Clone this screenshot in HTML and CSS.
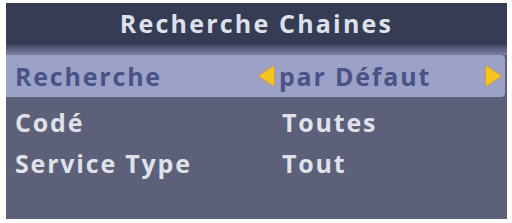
FILE: index.html
```
<!DOCTYPE html>
<html lang="fr">
<head>
    <meta charset="UTF-8">
    <title>Recherche Chaines</title>
    <link rel="stylesheet" href="styles.css">
</head>
<body>

    <div class="menu">
        <div class="menu-title">Recherche Chaines</div>
        <div class="menu-shade"></div>

        <div class="row on">
            <span class="label">Recherche</span>
            <span class="value">
                <svg class="arrow left" viewBox="0 0 18 22"><polygon points="17,1 2,11 17,21"/></svg>
                par Défaut
            </span>
            <svg class="arrow right" viewBox="0 0 18 22"><polygon points="1,1 16,11 1,21"/></svg>
        </div>
        <div class="row">
            <span class="label">Codé</span>
            <span class="value">Toutes</span>
        </div>
        <div class="row">
            <span class="label">Service Type</span>
            <span class="value">Tout</span>
        </div>
    </div>

</body>
</html>
```

FILE: styles.css
```
body{
    margin: 3px 5px 4px 6px;
    background: #fff;
}

.menu{
    height: 216px;
    background: #5c6079;
    font-family: "Open Sans", "DejaVu Sans", sans-serif;
    font-weight: bold;
    font-size: 25px;
    letter-spacing: 1.8px;
    color: #dfe1eb;
    overflow: hidden;
}

.menu-title{
    height: 42px;
    line-height: 40px;
    text-align: center;
    letter-spacing: 2.2px;
    background: #373c55;
    color: #dde1ec;
}
.menu-shade{
    height: 10px;
    background: linear-gradient(#434862, #7d82a4);
}

.row{
    display: flex;
    align-items: center;
    height: 41px;
    padding-left: 9px;
}
.row.on{
    height: 42px;
    margin: 0 2px 4px 0;
    border-radius: 0 4px 4px 0;
    background: #9ca1c8;
    color: #4b5286;
}

.label{
    width: 267px;
}
.value{
    flex: 1;
    display: flex;
    align-items: center;
}

.arrow{
    width: 18px;
    height: 22px;
    fill: #f4c51c;
    filter: drop-shadow(0 0 2px #e0952a);
}
.arrow.left{
    margin: 0 4px 0 -25px;
}
.arrow.right{
    margin-right: 2px;
}
```
